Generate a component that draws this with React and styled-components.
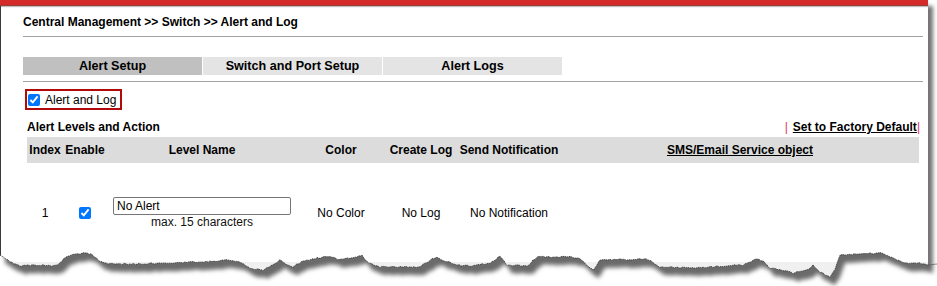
import React from "react";
import styled, { createGlobalStyle } from "styled-components";

const Global = createGlobalStyle`
  html, body { margin: 0; padding: 0; background: #fff; }
  body {
    font-family: "Liberation Sans", Arial, sans-serif;
    font-size: 12px;
    color: #000;
  }
  * { box-sizing: border-box; }
`;

const Stage = styled.div`
  position: relative;
  width: 937px;
  height: 286px;
  overflow: hidden;
  background: #fff;
`;

const Paper = styled.div`
  width: 928px;
  height: 286px;
  background: #fff;
  box-shadow: 5px 6px 4px rgba(0, 0, 0, 0.55);
  display: flex;
  flex-direction: column;
`;

const RedBar = styled.div`
  height: 6px;
  background: #d42b2a;
  border-bottom: 1px solid #9a3d3d;
  box-shadow: 0 1px 1px rgba(0, 0, 0, 0.25);
`;

const Body = styled.div`
  flex: 1;
  border-left: 1px solid #3a3a3a;
  padding: 8px 5px 0 22px;
  display: flex;
  flex-direction: column;
`;

const Breadcrumb = styled.div`
  font-weight: bold;
  line-height: 16px;
  height: 16px;
`;

const Rule = styled.div`
  height: 1px;
  background: #a2a2a2;
  margin-top: ${(p) => p.$gap}px;
`;

const Tabs = styled.div`
  display: flex;
  gap: 1px;
  margin-top: 20px;
`;

const Tab = styled.div`
  width: 179px;
  height: 18px;
  line-height: 18px;
  text-align: center;
  font-weight: bold;
  font-size: 12.6px;
  background: ${(p) => (p.$active ? "#c0c0c0" : "#e4e4e4")};
`;

const CheckFrame = styled.label`
  align-self: flex-start;
  margin: 7px 0 0 2px;
  width: 97px;
  height: 21px;
  border: 2px solid #b20a0c;
  display: flex;
  align-items: center;
  line-height: 14px;
`;

const Check = styled.input.attrs({ type: "checkbox" })`
  width: 12px;
  height: 12px;
  margin: 0 ${(p) => p.$mr || 0}px 0 ${(p) => p.$ml || 0}px;
`;

const TitleRow = styled.div`
  margin: 9px 4px 0;
  display: flex;
  justify-content: space-between;
  line-height: 16px;
`;

const Title = styled.div`
  font-weight: bold;
`;

const Links = styled.div`
  font-weight: bold;
  display: flex;
`;

const Pipe = styled.span`
  color: #e0306a;
  font-weight: normal;
  margin: ${(p) => p.$m};
`;

const Link = styled.span`
  text-decoration: underline;
`;

const Table = styled.div`
  margin: 2px 4px 0;
  display: grid;
  grid-template-columns: 36px 44px 190px 88px 72px 104px 1fr;
`;

const HeadCell = styled.div`
  height: 26px;
  background: #dcdcdc;
  display: flex;
  align-items: center;
  justify-content: center;
  font-weight: bold;
  white-space: nowrap;
  text-decoration: ${(p) => (p.$link ? "underline" : "none")};
`;

const Cell = styled.div`
  height: 100px;
  display: flex;
  flex-direction: column;
  align-items: center;
  justify-content: center;
  white-space: nowrap;
`;

const NameInput = styled.input`
  width: 178px;
  height: 18px;
  border: 1px solid #767676;
  border-radius: 2px;
  padding: 0 3px;
  font: 12px "Liberation Sans", Arial, sans-serif;
  color: #000;
  outline: none;
`;

const Caption = styled.div`
  line-height: 14px;
  color: #111;
`;

const TearSvg = styled.svg`
  position: absolute;
  left: 0;
  top: 236px;
  display: block;
`;

const KEY = [
  [0, 255], [6, 259], [13, 263], [20, 266], [33, 265], [43, 265], [50, 266], [58, 265],
  [63, 260], [67, 257], [72, 255], [80, 254], [87, 253], [93, 255], [97, 259], [100, 262],
  [110, 264], [133, 264], [167, 263], [200, 262], [227, 260], [240, 262], [250, 268],
  [263, 270], [273, 265], [280, 260], [287, 265], [293, 267], [303, 261], [317, 258],
  [330, 256], [337, 259], [353, 258], [362, 255], [367, 262], [380, 267], [400, 267],
  [420, 267], [430, 260], [437, 257], [443, 260], [457, 265], [470, 266], [490, 263],
  [500, 256], [507, 265], [527, 266], [537, 257], [570, 257], [580, 259], [593, 270],
  [600, 260], [647, 259], [660, 267], [693, 268], [743, 265], [757, 259], [763, 261],
  [770, 268], [793, 273], [807, 270], [813, 265], [820, 272], [830, 277], [835, 270],
  [840, 255], [860, 254], [880, 253], [893, 258], [903, 263], [920, 263], [928, 265],
  [937, 264],
];

function noise(x) {
  const s = Math.sin(x * 12.9898) * 43758.5453;
  return s - Math.floor(s) - 0.5;
}

function buildPoints() {
  const pts = [];
  for (let i = 0; i < KEY.length - 1; i++) {
    const [x0, y0] = KEY[i];
    const [x1, y1] = KEY[i + 1];
    for (let x = x0; x < x1; x += 2) {
      const t = (x - x0) / (x1 - x0);
      const y = y0 + (y1 - y0) * t + (x > 2 && x < 926 ? noise(x) * 1.6 : 0);
      pts.push([x, +y.toFixed(2)]);
    }
  }
  pts.push(KEY[KEY.length - 1]);
  return pts;
}

const PTS = buildPoints();
const LINE = "M" + PTS.map((p) => p.join(",")).join(" L");
const PAPER_PTS = PTS.filter((p) => p[0] <= 928);
const PAPER_LINE = "M" + PAPER_PTS.map((p) => p.join(",")).join(" L");

function TornEdge() {
  return (
    <TearSvg width="937" height="50" viewBox="0 236 937 50">
      <defs>
        <clipPath id="tearBelow">
          <path d={LINE + " L937,290 L0,290 Z"} />
        </clipPath>
        <clipPath id="tearAbove">
          <path d={LINE + " L937,230 L0,230 Z"} />
        </clipPath>
        <filter id="tearBlur" x="-5%" y="-50%" width="110%" height="200%">
          <feGaussianBlur stdDeviation="2.2" />
        </filter>
      </defs>
      <g clipPath="url(#tearAbove)">
        <rect x="1" y="262" width="927" height="30" fill="#f0f0f0" />
      </g>
      <g clipPath="url(#tearBelow)">
        <rect x="0" y="230" width="937" height="60" fill="#fff" />
        <path
          d={PAPER_LINE + " L928,230 L0,230 Z"}
          transform="translate(5,8)"
          fill="#6b6b6b"
          filter="url(#tearBlur)"
        />
      </g>
      <path
        d={LINE}
        fill="none"
        stroke="#2e2e2e"
        strokeWidth="0.8"
        strokeDasharray="1.3 0.7"
      />
    </TearSvg>
  );
}

const headers = [
  "Index",
  "Enable",
  "Level Name",
  "Color",
  "Create Log",
  "Send Notification",
];

export default function App() {
  return (
    <>
      <Global />
      <Stage>
        <Paper>
          <RedBar />
          <Body>
            <Breadcrumb>Central Management &gt;&gt; Switch &gt;&gt; Alert and Log</Breadcrumb>
            <Rule $gap={6} />
            <Tabs>
              <Tab $active>Alert Setup</Tab>
              <Tab>Switch and Port Setup</Tab>
              <Tab>Alert Logs</Tab>
            </Tabs>
            <Rule $gap={6} />
            <CheckFrame>
              <Check defaultChecked $ml={1} $mr={5} />
              Alert and Log
            </CheckFrame>
            <TitleRow>
              <Title>Alert Levels and Action</Title>
              <Links>
                <Pipe $m="0 5px 0 0">|</Pipe>
                <Link>Set to Factory Default</Link>
                <Pipe $m="0 -1px 0 0">|</Pipe>
              </Links>
            </TitleRow>
            <Table>
              {headers.map((h) => (
                <HeadCell key={h}>{h}</HeadCell>
              ))}
              <HeadCell $link>SMS/Email Service object</HeadCell>

              <Cell>1</Cell>
              <Cell>
                <Check defaultChecked />
              </Cell>
              <Cell>
                <NameInput defaultValue="No Alert" />
                <Caption>max. 15 characters</Caption>
              </Cell>
              <Cell>No Color</Cell>
              <Cell>No Log</Cell>
              <Cell>No Notification</Cell>
              <Cell />
            </Table>
          </Body>
        </Paper>
        <TornEdge />
      </Stage>
    </>
  );
}
